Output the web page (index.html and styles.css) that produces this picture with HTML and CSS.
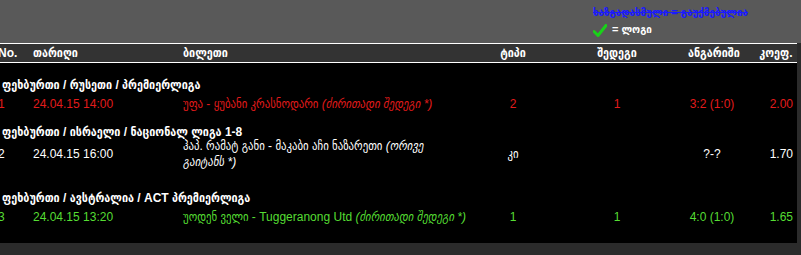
FILE: index.html
```html
<!DOCTYPE html>
<html lang="ka">
<head>
    <meta charset="UTF-8">
    <meta name="viewport" content="width=device-width, initial-scale=1.0">
    <title>ბილეთები</title>
    <link rel="stylesheet" href="styles.css">
</head>

<body>
    <!-- ლეგენდა -->
    <div class="legend">
        <div class="legend_line cancelled">ხაზგადასმული = გაუქმებულია</div>
        <div class="legend_line">
            <svg class="check" width="14" height="13" viewBox="0 0 14 13">
                <path d="M1 7.5 L5 11.5 L13 1.5" fill="none" stroke="#19d219" stroke-width="3" stroke-linecap="round" stroke-linejoin="round"/>
            </svg>
            <span>= ლოგი</span>
        </div>
    </div>

    <div class="bets">
        <table>
            <colgroup>
                <col class="c_no">
                <col class="c_date">
                <col class="c_ticket">
                <col class="c_type">
                <col class="c_result">
                <col class="c_score">
                <col class="c_coef">
            </colgroup>
            <thead>
                <tr>
                    <th class="no">No.</th>
                    <th>თარიღი</th>
                    <th>ბილეთი</th>
                    <th class="mid">ტიპი</th>
                    <th class="mid">შედეგი</th>
                    <th class="mid">ანგარიში</th>
                    <th class="right">კოეფ.</th>
                </tr>
            </thead>
            <tbody>
                <tr class="group"><td colspan="7">ფეხბურთი / რუსეთი / პრემიერლიგა</td></tr>
                <tr class="bet lost">
                    <td class="no">1</td>
                    <td>24.04.15 14:00</td>
                    <td class="ticket">უფა - ყუბანი კრასნოდარი <i>(ძირითადი შედეგი *)</i></td>
                    <td class="mid">2</td>
                    <td class="mid">1</td>
                    <td class="mid">3:2 (1:0)</td>
                    <td class="right">2.00</td>
                </tr>

                <tr class="group"><td colspan="7">ფეხბურთი / ისრაელი / ნაციონალ ლიგა 1-8</td></tr>
                <tr class="bet bet_tall">
                    <td class="no">2</td>
                    <td>24.04.15 16:00</td>
                    <td class="ticket">ჰაპ. რამატ განი - მაკაბი აჩი ნაზარეთი <i>(ორივე გაიტანს&nbsp;*)</i></td>
                    <td class="mid">კი</td>
                    <td class="mid"></td>
                    <td class="mid">?-?</td>
                    <td class="right">1.70</td>
                </tr>

                <tr class="group"><td colspan="7">ფეხბურთი / ავსტრალია / ACT პრემიერლიგა</td></tr>
                <tr class="bet won">
                    <td class="no">3</td>
                    <td>24.04.15 13:20</td>
                    <td class="ticket">უოდენ ველი - Tuggeranong Utd <i>(ძირითადი შედეგი *)</i></td>
                    <td class="mid">1</td>
                    <td class="mid">1</td>
                    <td class="mid">4:0 (1:0)</td>
                    <td class="right">1.65</td>
                </tr>
            </tbody>
        </table>
    </div>
</body>
</html>
```

FILE: styles.css
```css
* {
    margin: 0;
    padding: 0;
}

body {
    width: 801px;
    height: 255px;
    overflow: hidden;
    background-color: #2b2b2b;
    font-family: "Liberation Sans", "DejaVu Sans Condensed", sans-serif;
    font-size: 12px;
    color: #fff;
}

/* ლეგენდა ზედა ზოლში */
.legend {
    height: 43px;
    padding-left: 593px;
    background-color: #595959;
    box-sizing: border-box;
    padding-top: 5px;
}

.legend_line {
    display: flex;
    align-items: center;
    height: 15px;
    font-weight: bold;
    font-size: 11px;
}

.legend_line span {
    margin-left: 5px;
    margin-top: 3px;
}

.cancelled {
    color: #1a1aff;
    text-decoration: line-through;
}

.check {
    margin-top: 6px;
}

/* ცხრილი */
.bets {
    width: 797px;
    height: 200px;
    overflow: hidden;
    background-color: #000;
}

table {
    width: 811px;
    margin-left: -14px;
    border-collapse: collapse;
    table-layout: fixed;
}

.c_no { width: 47px; }
.c_date { width: 150px; }
.c_ticket { width: 297px; }
.c_type { width: 66px; }
.c_result { width: 142px; }
.c_score { width: 48px; }
.c_coef { width: 61px; }

thead th {
    height: 18px;
    line-height: 18px;
    font-weight: bold;
    text-align: left;
    background-color: #333;
    border-top: 1px solid #fff;
    border-bottom: 1px solid #fff;
    white-space: nowrap;
}

thead th.right {
    border-right: 1px solid #fff;
}

.no {
    padding-left: 12px;
}

.mid {
    text-align: center !important;
}

.right {
    text-align: right !important;
    padding-right: 4px;
}

.group td {
    padding: 14px 0 0 16px;
    line-height: 12px;
    font-weight: bold;
}

.group:first-child td {
    padding-top: 16px;
}

.bet td {
    padding-top: 5px;
    line-height: 16px;
    vertical-align: middle;
    white-space: nowrap;
}

.bet .ticket {
    white-space: normal;
    padding-right: 8px;
}

.bet_tall td {
    padding: 0 0 8px;
}

.bet_tall .no {
    padding-left: 12px;
}

.bet_tall .right {
    padding-right: 4px;
}

.lost td {
    color: #e21b1b;
}

.won td {
    color: #55dd33;
}
```
